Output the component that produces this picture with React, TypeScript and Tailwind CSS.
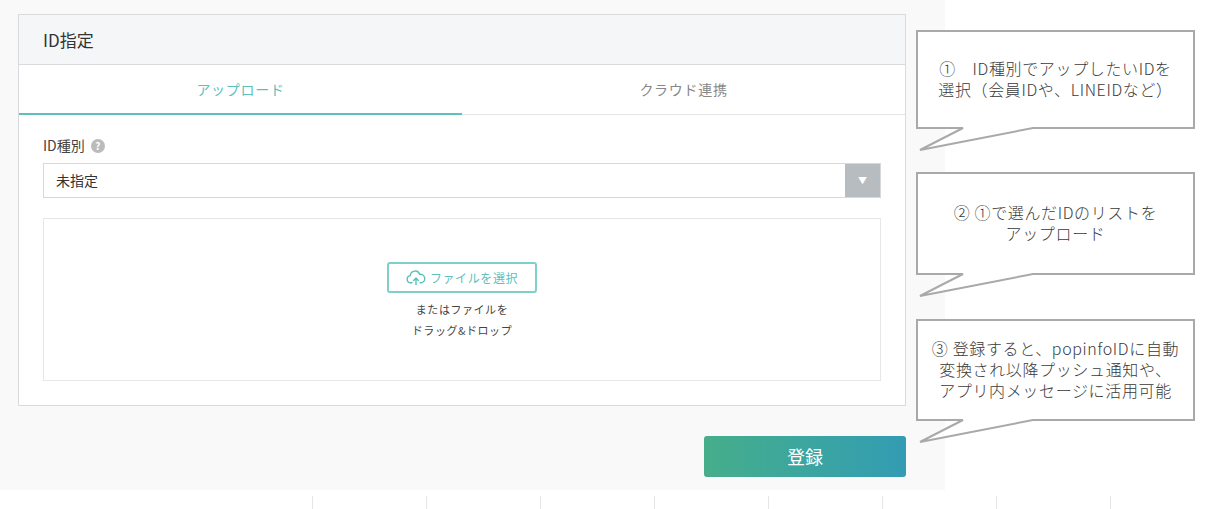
import React from "react";

const font = { fontFamily: '"Noto Sans CJK JP", "Noto Sans", sans-serif' };

const Callout = ({ top, h, lines }: { top: number; h: number; lines: string[] }) => (
  <div className="absolute left-0 w-[296px]" style={{ top, height: h + 26 }}>
    <svg width="296" height={h + 26} className="absolute left-0 top-0">
      <path
        d={`M8 1 H285 V${h} H124 L11 ${h + 22} L54 ${h} H8 Z`}
        fill="white"
        stroke="#a9a9a9"
        strokeWidth="2"
      />
    </svg>
    <div
      className="absolute left-[8px] top-0 w-[277px] flex flex-col items-center justify-center text-[16px] leading-[21px] text-[#3a3a3a] text-center tracking-[0.04em] font-light"
      style={{ height: h }}
    >
      {lines.map((l) => (
        <div key={l} className="whitespace-nowrap">{l}</div>
      ))}
    </div>
  </div>
);

export default function App() {
  return (
    <div className="relative w-[1206px] h-[509px] bg-white overflow-hidden" style={font}>
      <div className="w-[945px] h-[490px] bg-[#f9f9f9] pt-[14px] pl-[18px]">
        <div className="w-[888px] border border-[#d8dadd] bg-white">
          <div className="h-[50px] bg-[#f5f6f8] border-b border-[#d8dadd] flex items-center px-6 text-[17px] text-[#333]">
            ID指定
          </div>
          <div className="flex h-[50px] border-b border-[#e3e5e8] text-[14px] tracking-wider">
            <div className="flex-1 flex items-center justify-center text-[#5cc1bc] border-b-2 border-[#5cc1bc] -mb-px">
              アップロード
            </div>
            <div className="flex-1 flex items-center justify-center text-[#888]">クラウド連携</div>
          </div>
          <div className="px-6 pt-[20px] pb-6">
            <div className="flex items-center gap-[6px] text-[14px] text-[#444]">
              ID種別
              <span className="w-[14px] h-[14px] rounded-full bg-[#bbb] text-white text-[10px] leading-[14px] text-center font-bold">?</span>
            </div>
            <div className="mt-[7px] h-[35px] border border-[#d6d8db] flex items-stretch">
              <div className="flex-1 flex items-center px-3 text-[14px] text-[#333]">未指定</div>
              <div className="w-[35px] bg-[#b7bcc0] flex items-center justify-center text-white text-[9px]">▼</div>
            </div>
            <div className="mt-[20px] h-[163px] border border-[#e6e7e9] flex flex-col items-center pt-[43px]">
              <div className="w-[150px] h-[31px] border-2 border-[#7fd0cb] rounded-[3px] flex items-center justify-center gap-1 text-[12px] text-[#5cc1bc] tracking-wider">
                <svg width="20" height="16" viewBox="0 0 24 20" fill="none" stroke="#5cc1bc" strokeWidth="1.8" strokeLinecap="round" strokeLinejoin="round">
                  <path d="M7 16H5.5a4.5 4.5 0 0 1-.6-8.96A6 6 0 0 1 16.6 5.5 4.5 4.5 0 0 1 18.5 16H17" />
                  <path d="M12 18v-8M9 13l3-3 3 3" />
                </svg>
                ファイルを選択
              </div>
              <div className="mt-[6px] text-[11px] leading-[21px] text-[#444] text-center tracking-wider">
                <div>またはファイルを</div>
                <div>ドラッグ&ドロップ</div>
              </div>
            </div>
          </div>
        </div>
        <div className="flex justify-end w-[888px] mt-[30px]">
          <button className="w-[202px] h-[41px] rounded-[3px] bg-gradient-to-r from-[#46ae8a] to-[#339cb3] text-white text-[18px]">
            登録
          </button>
        </div>
      </div>
      <div className="flex pl-[312px] h-[19px] pt-[6px]">
        {Array.from({ length: 8 }).map((_, i) => (
          <div key={i} className="w-[114px] shrink-0 h-[13px] border-l border-[#e5e5e5]" />
        ))}
      </div>
      <div className="absolute left-[909px] top-0 w-[296px] h-[509px]">
        <Callout top={30} h={98} lines={["①　ID種別でアップしたいIDを", "選択（会員IDや、LINEIDなど）"]} />
        <Callout top={172} h={102} lines={["②  ①で選んだIDのリストを", "アップロード"]} />
        <Callout top={319} h={101} lines={["③  登録すると、popinfoIDに自動", "変換され以降プッシュ通知や、", "アプリ内メッセージに活用可能"]} />
      </div>
    </div>
  );
}
